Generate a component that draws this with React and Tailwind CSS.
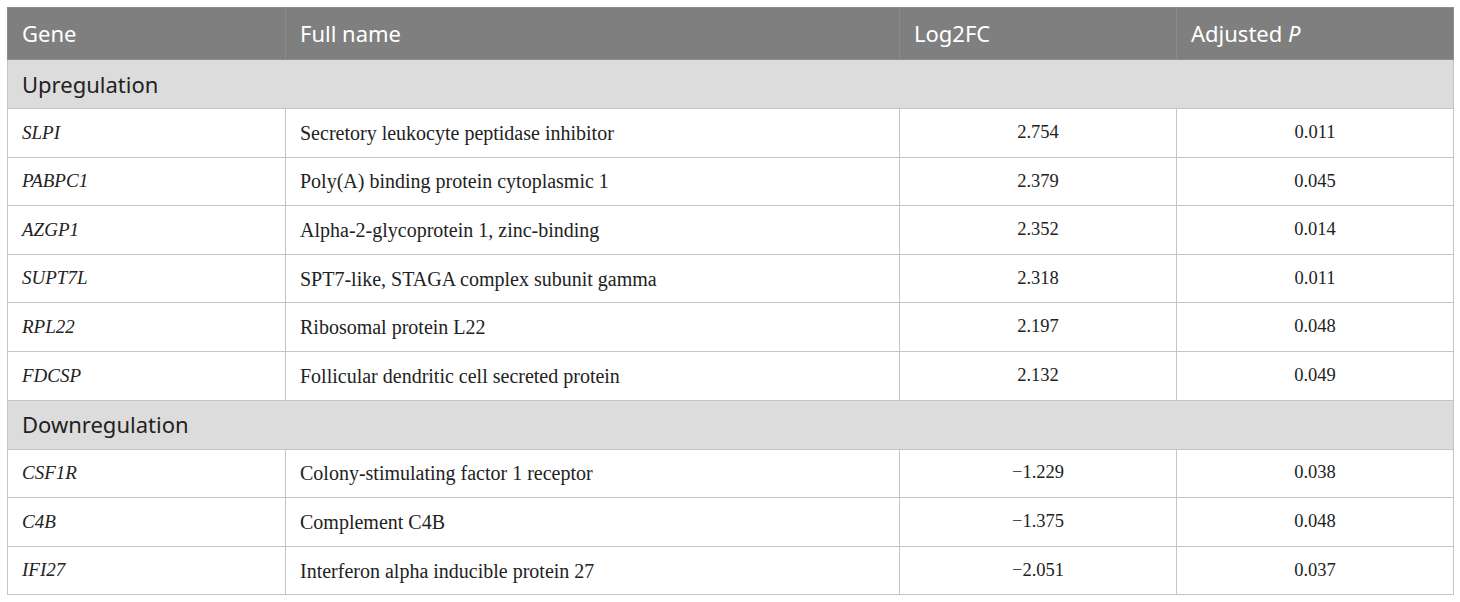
import React from 'react'

const up = [
  ['SLPI', 'Secretory leukocyte peptidase inhibitor', '2.754', '0.011'],
  ['PABPC1', 'Poly(A) binding protein cytoplasmic 1', '2.379', '0.045'],
  ['AZGP1', 'Alpha-2-glycoprotein 1, zinc-binding', '2.352', '0.014'],
  ['SUPT7L', 'SPT7-like, STAGA complex subunit gamma', '2.318', '0.011'],
  ['RPL22', 'Ribosomal protein L22', '2.197', '0.048'],
  ['FDCSP', 'Follicular dendritic cell secreted protein', '2.132', '0.049'],
]

const down = [
  ['CSF1R', 'Colony-stimulating factor 1 receptor', '\u22121.229', '0.038'],
  ['C4B', 'Complement C4B', '\u22121.375', '0.048'],
  ['IFI27', 'Interferon alpha inducible protein 27', '\u22122.051', '0.037'],
]

const sans = { fontFamily: '"Noto Sans", "Open Sans", sans-serif' }
const serif = { fontFamily: '"Liberation Serif", "Times New Roman", serif' }

function Section({ title }) {
  return (
    <tr className="h-[49px] bg-[#dcdcdc]">
      <td colSpan={4} className="border border-[#c4c4c4] px-[14px] text-[22px] text-[#222]" style={sans}>
        {title}
      </td>
    </tr>
  )
}

function Row({ r }) {
  return (
    <tr className="h-[48.6px] bg-white text-[#222]" style={serif}>
      <td className="border border-[#c4c4c4] px-[14px] text-[19px] italic">{r[0]}</td>
      <td className="border border-[#c4c4c4] px-[14px] text-[20px]">{r[1]}</td>
      <td className="border border-[#c4c4c4] text-center text-[18.5px]">{r[2]}</td>
      <td className="border border-[#c4c4c4] text-center text-[18.5px]">{r[3]}</td>
    </tr>
  )
}

export default function App() {
  return (
    <div className="min-h-[602px] w-[1460px] bg-white p-[7px]">
      <table className="w-[1446px] table-fixed border-collapse">
        <colgroup>
          <col className="w-[278px]" />
          <col className="w-[614px]" />
          <col className="w-[277px]" />
          <col className="w-[277px]" />
        </colgroup>
        <thead>
          <tr className="h-[52px] bg-[#7f7f7f] text-left text-[22px] text-white" style={sans}>
            <th className="border border-[#8c8c8c] px-[14px] font-normal">Gene</th>
            <th className="border border-[#8c8c8c] px-[14px] font-normal">Full name</th>
            <th className="border border-[#8c8c8c] px-[14px] font-normal">Log2FC</th>
            <th className="border border-[#8c8c8c] px-[14px] font-normal">
              Adjusted <span className="italic">P</span>
            </th>
          </tr>
        </thead>
        <tbody>
          <Section title="Upregulation" />
          {up.map((r) => (
            <Row key={r[0]} r={r} />
          ))}
          <Section title="Downregulation" />
          {down.map((r) => (
            <Row key={r[0]} r={r} />
          ))}
        </tbody>
      </table>
    </div>
  )
}
